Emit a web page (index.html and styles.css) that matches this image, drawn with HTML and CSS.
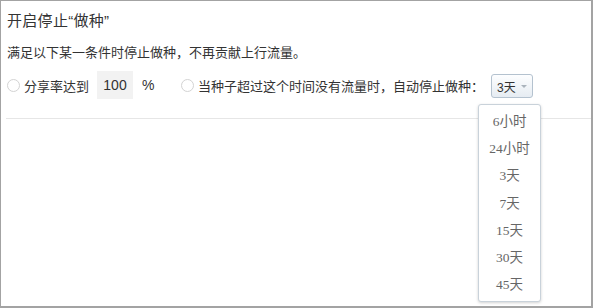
FILE: index.html
```html
<!DOCTYPE html>
<html lang="zh-CN">
<head>
<meta charset="utf-8">
<title>开启停止做种</title>
<link rel="stylesheet" href="styles.css">
</head>
<body>
<div class="panel">
  <div class="title">开启停止“做种”</div>
  <div class="desc">满足以下某一条件时停止做种，不再贡献上行流量。</div>
  <div class="row">
    <span class="radio"></span>
    <span class="label">分享率达到</span>
    <span class="num">100</span>
    <span class="pct">%</span>
    <span class="radio radio-2"></span>
    <span class="label">当种子超过这个时间没有流量时，自动停止做种：</span>
    <span class="select-wrap">
      <span class="select">3天<span class="caret"></span></span>
      <ul class="menu">
        <li>6小时</li>
        <li>24小时</li>
        <li>3天</li>
        <li>7天</li>
        <li>15天</li>
        <li>30天</li>
        <li>45天</li>
      </ul>
    </span>
  </div>
  <div class="rule"></div>
</div>
</body>
</html>
```

FILE: styles.css
```css
html, body {
  margin: 0;
  padding: 0;
  background: #fff;
}

.panel {
  box-sizing: border-box;
  width: 593px;
  height: 308px;
  border: 1px solid #a3a3a3;
  border-right-width: 2px;
  border-bottom-width: 2px;
  padding: 10px 0 0 6px;
  font-family: "Liberation Sans", "Noto Sans CJK SC", sans-serif;
  color: #333;
}

.title {
  font-size: 15px;
  line-height: 20px;
  height: 20px;
  letter-spacing: 0.3px;
}

.desc {
  margin-top: 12px;
  font-size: 13px;
  line-height: 20px;
  height: 20px;
}

.row {
  margin-top: 8px;
  height: 28px;
  display: flex;
  align-items: center;
  font-size: 13px;
}

.radio {
  box-sizing: border-box;
  width: 13px;
  height: 13px;
  border: 1px solid #d3d3d3;
  border-radius: 50%;
  margin-right: 4px;
  flex: none;
}

.radio-2 {
  margin-left: 28px;
}

.label {
  white-space: nowrap;
}

.num {
  box-sizing: border-box;
  width: 36px;
  height: 28px;
  margin-left: 8px;
  background: #f2f2f2;
  font-size: 14px;
  line-height: 28px;
  text-align: center;
}

.pct {
  margin-left: 9px;
  font-size: 14px;
  width: 11px;
}

.select-wrap {
  position: relative;
  margin-left: 7px;
  margin-top: 2px;
}

.select {
  box-sizing: border-box;
  display: flex;
  align-items: center;
  width: 42px;
  height: 24px;
  padding-left: 5px;
  border: 1px solid #b4c2cf;
  border-radius: 3px;
  background: linear-gradient(#fdfeff, #e6ecf2);
  font-size: 12px;
  color: #333;
}

.caret {
  width: 0;
  height: 0;
  margin-left: 5px;
  margin-top: 1px;
  border-left: 3px solid transparent;
  border-right: 3px solid transparent;
  border-top: 3px solid #aab3bc;
}

.menu {
  position: absolute;
  left: -13px;
  top: 30px;
  box-sizing: border-box;
  width: 63px;
  height: 198px;
  margin: 0;
  padding: 3px 0 0;
  list-style: none;
  background: #fff;
  border: 1px solid #c9d2da;
  border-radius: 3px;
  box-shadow: 0 1px 3px rgba(0, 0, 0, 0.18);
  font-family: "Liberation Serif", "Noto Sans CJK SC", serif;
  font-size: 13.5px;
  color: #666;
  text-align: center;
}

.menu li {
  height: 27.2px;
  line-height: 27.2px;
}

.rule {
  margin-top: 19px;
  margin-left: -1px;
  height: 1px;
  background: #e6e6e6;
}
```
